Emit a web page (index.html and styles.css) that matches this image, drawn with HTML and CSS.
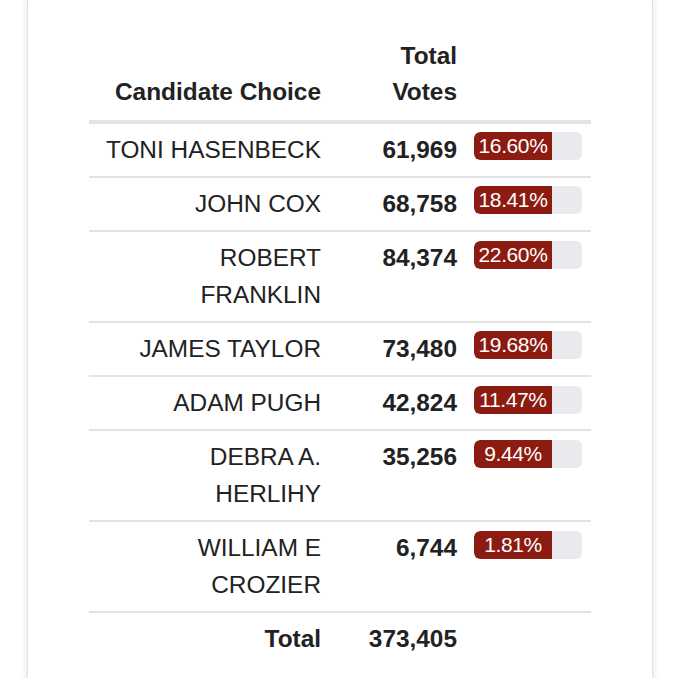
FILE: index.html
```html
<!DOCTYPE html>
<html lang="en">
<head>
<meta charset="utf-8">
<title>Results</title>
<link rel="stylesheet" href="styles.css">
</head>
<body>
<div class="page">
  <div class="card">
    <table class="results">
      <colgroup>
        <col class="c-name">
        <col class="c-votes">
        <col class="c-bar">
      </colgroup>
      <thead>
        <tr>
          <th class="name">Candidate Choice</th>
          <th class="votes">Total Votes</th>
          <th class="bar"></th>
        </tr>
      </thead>
      <tbody>
        <tr>
          <td class="name">TONI HASENBECK</td>
          <td class="votes">61,969</td>
          <td class="bar"><div class="track"><div class="fill">16.60%</div></div></td>
        </tr>
        <tr>
          <td class="name">JOHN COX</td>
          <td class="votes">68,758</td>
          <td class="bar"><div class="track"><div class="fill">18.41%</div></div></td>
        </tr>
        <tr>
          <td class="name">ROBERT FRANKLIN</td>
          <td class="votes">84,374</td>
          <td class="bar"><div class="track"><div class="fill">22.60%</div></div></td>
        </tr>
        <tr>
          <td class="name">JAMES TAYLOR</td>
          <td class="votes">73,480</td>
          <td class="bar"><div class="track"><div class="fill">19.68%</div></div></td>
        </tr>
        <tr>
          <td class="name">ADAM PUGH</td>
          <td class="votes">42,824</td>
          <td class="bar"><div class="track"><div class="fill">11.47%</div></div></td>
        </tr>
        <tr>
          <td class="name">DEBRA A. HERLIHY</td>
          <td class="votes">35,256</td>
          <td class="bar"><div class="track"><div class="fill">9.44%</div></div></td>
        </tr>
        <tr>
          <td class="name">WILLIAM E CROZIER</td>
          <td class="votes">6,744</td>
          <td class="bar"><div class="track"><div class="fill">1.81%</div></div></td>
        </tr>
      </tbody>
      <tfoot>
        <tr>
          <td class="name total">Total</td>
          <td class="votes total">373,405</td>
          <td class="bar"></td>
        </tr>
      </tfoot>
    </table>
  </div>
</div>
</body>
</html>
```
FILE: styles.css
```css
html, body {
  margin: 0;
  padding: 0;
  background: #ffffff;
}

body {
  font-family: "Liberation Sans", Arial, Helvetica, sans-serif;
  color: #222222;
  font-size: 24.4px;
  line-height: 36.5px;
}

.page {
  padding: 0 27px;
  overflow: hidden;
  height: 678px;
}

.card {
  background: #ffffff;
  border: 1px solid #e2e2e2;
  border-top: none;
  box-shadow: 0 0 7px rgba(0, 0, 0, 0.13);
  padding: 29.5px 61px 60px;
}

.results {
  width: 502px;
  border-collapse: collapse;
  table-layout: fixed;
}

.c-name { width: 240px; }
.c-votes { width: 136px; }
.c-bar { width: 126px; }

.results th,
.results td {
  vertical-align: top;
  padding: 8px 0 7.8px;
}

.results thead th {
  font-weight: bold;
  vertical-align: bottom;
  padding-bottom: 9px;
  border-bottom: 4.5px solid #e3e3e5;
}

.results tbody td {
  border-bottom: 2px solid #e3e3e5;
}

.name {
  text-align: right;
  padding-left: 12px !important;
  padding-right: 8px !important;
}

.votes {
  text-align: right;
  font-weight: bold;
  padding-left: 16px !important;
  padding-right: 8px !important;
}

.bar {
  padding-left: 9px !important;
  padding-right: 9px !important;
}

.total {
  font-weight: bold;
}

.track {
  width: 108px;
  height: 28px;
  margin-top: 0.5px;
  background: #e9e9ee;
  border-radius: 6px;
  overflow: hidden;
}

.fill {
  width: 78px;
  height: 28px;
  background: #8c1b12;
  color: #ffffff;
  font-size: 21px;
  letter-spacing: -0.4px;
  line-height: 27px;
  text-align: center;
  border-radius: 6px 0 0 6px;
}
```
